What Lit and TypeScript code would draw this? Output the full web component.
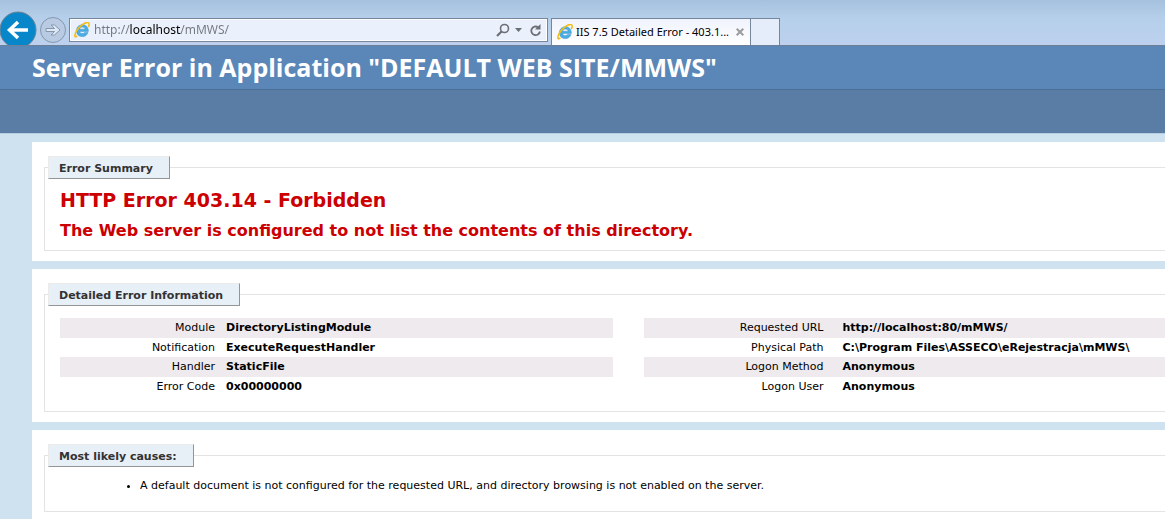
import { LitElement, html, css, svg } from "lit";
import { customElement } from "lit/decorators.js";

interface Detail {
  label: string;
  value: string;
}

const requestDetails: Detail[] = [
  { label: "Module", value: "DirectoryListingModule" },
  { label: "Notification", value: "ExecuteRequestHandler" },
  { label: "Handler", value: "StaticFile" },
  { label: "Error Code", value: "0x00000000" },
];

const logonDetails: Detail[] = [
  { label: "Requested URL", value: "http://localhost:80/mMWS/" },
  { label: "Physical Path", value: "C:\\Program Files\\ASSECO\\eRejestracja\\mMWS\\" },
  { label: "Logon Method", value: "Anonymous" },
  { label: "Logon User", value: "Anonymous" },
];

const browserLogo = html`<svg class="logo" viewBox="0 0 16 16" width="16" height="16" aria-hidden="true">
  ${svg`
    <path d="M14.4 9.400H5.700c.2 1.400 1.300 2.100 2.700 2.100 1 0 1.800-.4 2.300-1.100h3.300c-.8 2.600-2.900 4.200-5.700 4.200-3.500 0-5.900-2.400-5.900-5.900C2.400 5.200 5 2.700 8.400 2.700c3.700 0 6.100 2.600 6 6.700zM5.700 7.200h5.400C10.900 5.900 9.900 5.100 8.400 5.100S5.900 5.900 5.700 7.200z"
      fill="#4aaee4" stroke="#2b86c5" stroke-width=".4"/>
    <path d="M3.300 13.800C1.700 15.500.6 15 .9 13 1.300 10.400 3.600 6.800 6.900 3.900 10.200 1 13.600-.1 14.700 1c.8.8.5 2.400-.4 4.200"
      fill="none" stroke="#f5bd17" stroke-width="1.600"/>
  `}
</svg>`;

@customElement("browser-bar")
export class BrowserBar extends LitElement {
  static styles = css`
    :host {
      display: flex;
      align-items: flex-start;
      flex: none;
      height: 46px;
      box-sizing: border-box;
      overflow: hidden;
      border-bottom: 1px solid #6d7f96;
      background: linear-gradient(#a6c1de, #b5cfea 40%, #bdd1ee);
      font-family: "Noto Sans", "Open Sans", sans-serif;
      font-size: 12px;
    }
    button {
      padding: 0;
      border: 0;
      background: none;
      display: flex;
      flex: none;
    }
    .nav {
      display: flex;
      flex: none;
      width: 69px;
      padding-top: 11px;
    }
    .address {
      display: flex;
      align-items: center;
      flex: none;
      box-sizing: border-box;
      width: 479px;
      height: 24px;
      margin-top: 18px;
      padding: 0 5px 0 4px;
      border: 1px solid #76879b;
      box-shadow: inset 0 0 0 1px #fff;
      background: #ebf1fc;
    }
    .logo {
      flex: none;
    }
    .url {
      flex: 1;
      min-width: 0;
      margin-left: 4px;
      padding: 0;
      border: 0;
      outline: 0;
      font: inherit;
      color: transparent;
      background: linear-gradient(90deg, #73787f 36px, #000 36px 87px, #73787f 87px);
      -webkit-background-clip: text;
      background-clip: text;
    }
    .drop {
      margin: 0 8px 0 5px;
    }
    .tab {
      display: flex;
      align-items: center;
      flex: none;
      box-sizing: border-box;
      width: 200px;
      height: 27px;
      margin: 18px 0 0 3px;
      padding: 0 6px 0 5px;
      border: 1px solid #76879b;
      border-bottom: 0;
      background: linear-gradient(#f0f3fd, #fff);
    }
    .name {
      flex: 1;
      min-width: 0;
      margin-left: 3px;
      font-size: 11px;
      white-space: nowrap;
    }
    .new {
      box-sizing: border-box;
      width: 29px;
      height: 27px;
      margin-top: 18px;
      border: 1px solid #76879b;
      border-width: 1px 1px 0 0;
      background: #e5edfb;
    }
  `;

  render() {
    return html`
      <nav class="nav">
        <button aria-label="Back">
          <svg width="38" height="38" viewBox="0 0 38 38">
            <circle cx="18" cy="19" r="18" fill="#0787c9" stroke="#6d8194" />
            <path d="M28 19H10M18 11l-8.500 8 8.500 8" fill="none" stroke="#fff" stroke-width="3.500" />
          </svg>
        </button>
        <button aria-label="Forward">
          <svg width="30" height="38" viewBox="0 0 30 38">
            <circle cx="15" cy="19" r="12.500" fill="#b9cbe2" stroke="#8597ad" />
            <path d="M8 17.500h8.500L13 14h3.500l5.500 5-5.500 5H13l3.500-3.500H8z" fill="#dfe9f6" stroke="#8597ad" />
          </svg>
        </button>
      </nav>
      <div class="address">
        ${browserLogo}
        <input class="url" type="text" aria-label="Address" value="http://localhost/mMWS/" />
        <button aria-label="Search">
          <svg width="14" height="14" viewBox="0 0 14 14" fill="none" stroke="#6b6f75">
            <circle cx="8.500" cy="5.500" r="4" stroke-width="1.600" />
            <path d="M5.500 8.500L1 13" stroke-width="2.200" />
          </svg>
        </button>
        <button class="drop" aria-label="Show address list">
          <svg width="7" height="4" viewBox="0 0 7 4"><path d="M0 0h7L3.500 4z" fill="#6b6f75" /></svg>
        </button>
        <button aria-label="Refresh">
          <svg width="12" height="13" viewBox="0 0 12 13">
            <path d="M8 3.200A4.300 4.300 0 1 0 9.900 7.500" fill="none" stroke="#6b6f75" stroke-width="1.800" />
            <path d="M10.500 0v5.500H5z" fill="#6b6f75" />
          </svg>
        </button>
      </div>
      <div class="tab">
        ${browserLogo}
        <span class="name">IIS 7.5 Detailed Error - 403.1...</span>
        <button aria-label="Close tab">
          <svg width="8" height="8" viewBox="0 0 8 8">
            <path d="M.7.7l6.600 6.600M7.300.7L.7 7.300" stroke="#9c9c9c" stroke-width="2" />
          </svg>
        </button>
      </div>
      <button class="new" aria-label="New tab"></button>
    `;
  }
}

@customElement("app-root")
export class AppRoot extends LitElement {
  static styles = css`
    :host {
      display: flex;
      flex-direction: column;
      height: 100vh;
      background: #cfe2ef;
      color: #000;
      font-family: Verdana, "DejaVu Sans", sans-serif;
      font-size: 11px;
      line-height: 14px;
    }
    .title {
      flex: none;
      margin: 0;
      padding: 5px 32px 6px;
      border-bottom: 1px solid #4c6f98;
      background: #5a87b8;
      color: #fff;
      font: 700 25px/32px "Trebuchet MS", "Open Sans", sans-serif;
      white-space: nowrap;
    }
    .band {
      flex: none;
      height: 43px;
      background: #5a7da6;
      border-bottom: 1px solid #b9cde0;
    }
    .content {
      display: flex;
      flex: 1;
      min-height: 0;
      flex-direction: column;
      gap: 8px;
      padding: 8px 0 0 32px;
      overflow: hidden;
    }
    .card {
      flex: none;
      padding: 14px 0 10px 12px;
      background: #fff;
    }
    .group {
      margin: 0;
      min-width: 0;
      padding: 0 0 0 15px;
      border: 1px solid #e3e3e3;
      border-right: 0;
    }
    .legend {
      box-sizing: border-box;
      margin-left: -12px;
      padding: 5px 16px 2px 10px;
      border: 1px solid #959595;
      border-top-color: #ebebeb;
      border-left-color: #ebebeb;
      background: #e7eff7;
      color: #333;
      font-weight: bold;
    }
    h2,
    h3 {
      margin: 0;
      color: #c00;
      font-weight: bold;
    }
    h2 {
      padding-top: 8px;
      font-size: 19px;
      line-height: 26px;
    }
    h3 {
      padding: 7px 0 8px;
      font-size: 16px;
      line-height: 22px;
    }
    .tables {
      display: grid;
      grid-template-columns: 50% 1fr;
      column-gap: 31px;
      padding: 12px 0 15px;
    }
    table {
      width: 100%;
      border-collapse: collapse;
      table-layout: fixed;
    }
    tr:nth-child(odd) {
      background: #efeaed;
    }
    th,
    td {
      padding: 3px 0;
      text-align: left;
      white-space: nowrap;
    }
    tr:nth-child(even) > * {
      padding-bottom: 2px;
    }
    th {
      width: 155px;
      font-weight: normal;
      text-align: right;
    }
    td {
      padding-left: 11px;
      font-weight: bold;
    }
    .wide th {
      width: 180px;
    }
    .wide td {
      padding-left: 19px;
    }
    .causes {
      margin: 0;
      padding: 12px 0 18px 80px;
    }
  `;

  private renderTable(details: Detail[], name: string) {
    return html`<table class=${name}>
      <tbody>
        ${details.map((d) => html`<tr><th scope="row">${d.label}</th><td>${d.value}</td></tr>`)}
      </tbody>
    </table>`;
  }

  render() {
    return html`
      <browser-bar></browser-bar>
      <h1 class="title">Server Error in Application "DEFAULT WEB SITE/MMWS"</h1>
      <div class="band"></div>
      <main class="content">
        <section class="card">
          <fieldset class="group">
            <legend class="legend">Error Summary</legend>
            <h2>HTTP Error 403.14 - Forbidden</h2>
            <h3>The Web server is configured to not list the contents of this directory.</h3>
          </fieldset>
        </section>
        <section class="card">
          <fieldset class="group">
            <legend class="legend">Detailed Error Information</legend>
            <div class="tables">
              ${this.renderTable(requestDetails, "narrow")}
              ${this.renderTable(logonDetails, "wide")}
            </div>
          </fieldset>
        </section>
        <section class="card">
          <fieldset class="group">
            <legend class="legend">Most likely causes:</legend>
            <ul class="causes">
              <li>A default document is not configured for the requested URL, and directory browsing is not enabled on the server.</li>
            </ul>
          </fieldset>
        </section>
      </main>
    `;
  }
}
